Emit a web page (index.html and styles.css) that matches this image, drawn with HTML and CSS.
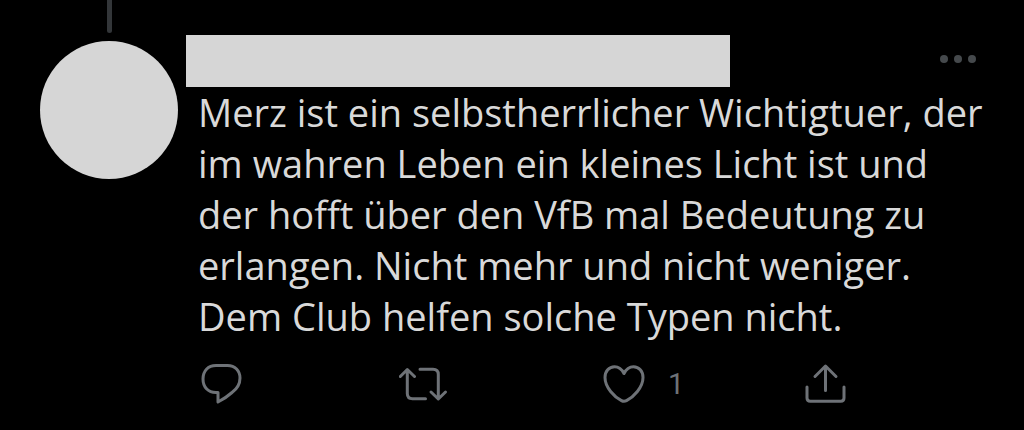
FILE: index.html
```html
<!DOCTYPE html>
<html lang="de">
<head>
    <meta charset="UTF-8">
    <meta name="viewport" content="width=device-width, initial-scale=1.0">
    <title>Tweet</title>
    <link rel="stylesheet" href="styles.css">
</head>
<body>
    <article class="tweet">
        <div class="side">
            <div class="thread-line"></div>
            <div class="avatar"></div>
        </div>
        <div class="content">
            <header class="tweet-header">
                <div class="name"></div>
                <button class="more" type="button" aria-label="Mehr">
                    <svg width="36" height="8" viewBox="0 0 36 8" fill="currentColor">
                        <circle cx="4" cy="4" r="4"/>
                        <circle cx="18" cy="4" r="4"/>
                        <circle cx="32" cy="4" r="4"/>
                    </svg>
                </button>
            </header>
            <p class="text">Merz ist ein selbstherrlicher Wichtigtuer, der<br>im wahren Leben ein kleines Licht ist und<br>der hofft über den VfB mal Bedeutung zu<br>erlangen. Nicht mehr und nicht weniger.<br>Dem Club helfen solche Typen nicht.</p>
            <div class="actions">
                <button type="button" aria-label="Antworten">
                    <svg class="icon" width="48" height="48" viewBox="0 0 48 48">
                        <path d="M18 5.500H29.500C37 5.500 42 10.500 42 18C42 24 39.500 28.500 34 32.500C30 36 25 39.500 20 42V32.500H18C10 32.500 5 27 5 19C5 11 10 5.500 18 5.500Z"/>
                    </svg>
                </button>
                <button type="button" aria-label="Retweeten">
                    <svg class="icon" width="52" height="48" viewBox="4 0 52 48">
                        <path d="M5.300 16.500L12.300 9.500L19.500 16.500M12.300 10V33.500Q12.300 38.700 17.500 38.700H30.500"/>
                        <path d="M25 9.300H38Q43.300 9.300 43.300 14.500V38.500M36 32L43.300 39L50.500 32"/>
                    </svg>
                </button>
                <button type="button" aria-label="Gefällt mir, 1">
                    <svg class="icon" width="48" height="48" viewBox="0 0 48 48">
                        <path d="M24 13.500C22 9.500 18.500 6.700 14.500 6.700C9 6.700 5 11.500 5 17.500C5 27.500 14.500 37 21.500 40.700Q24 42 26.500 40.700C33.500 37 43 27.500 43 17.500C43 11.500 39 6.700 33.500 6.700C29.500 6.700 26 9.500 24 13.500Z"/>
                    </svg>
                    <span class="count">1</span>
                </button>
                <button type="button" aria-label="Teilen">
                    <svg class="icon" width="48" height="48" viewBox="1 0 48 48">
                        <path d="M15 16.500L25.500 6L36 16.500M25.500 6.500V30.500"/>
                        <path d="M7 27V38Q7 41.300 10.300 41.300H40.700Q44 41.300 44 38V27"/>
                    </svg>
                </button>
            </div>
        </div>
    </article>
</body>
</html>
```

FILE: styles.css
```css
* { box-sizing: border-box; }
body {
    margin: 0;
    background: #000;
    color: #d9d9d9;
    font-family: "Open Sans", "Noto Sans", sans-serif;
}
.tweet {
    display: flex;
    gap: 8px;
    padding: 0 22px 18px 40px;
}
.side {
    flex: none;
    display: flex;
    flex-direction: column;
    align-items: center;
    gap: 8px;
}
.thread-line {
    width: 5px;
    height: 33px;
    background: #333639;
    border-radius: 0 0 3px 3px;
}
.avatar {
    width: 138px;
    height: 138px;
    background: #d6d6d6;
    border-radius: 50%;
}
.content {
    flex: 1;
    min-width: 0;
    padding-top: 35px;
}
.tweet-header {
    display: flex;
    justify-content: space-between;
    align-items: center;
    padding-right: 26px;
}
.name {
    width: 544px;
    height: 52px;
    background: #d6d6d6;
}
button {
    display: flex;
    align-items: center;
    padding: 0;
    background: none;
    border: none;
    color: #6e7277;
    font-family: inherit;
    cursor: pointer;
}
.more {
    padding-bottom: 4px;
    color: #45494c;
}
.text {
    margin: 0;
    padding-left: 12px;
    font-size: 38px;
    line-height: 51px;
}
.actions {
    display: grid;
    grid-template-columns: repeat(4, 1fr);
    padding: 18px 0 0 12px;
}
.icon {
    fill: none;
    stroke: currentColor;
    stroke-width: 3;
    stroke-linecap: round;
    stroke-linejoin: round;
}
.count {
    margin-left: 20px;
    font-family: Roboto, sans-serif;
    font-size: 29px;
    line-height: 48px;
}
```
